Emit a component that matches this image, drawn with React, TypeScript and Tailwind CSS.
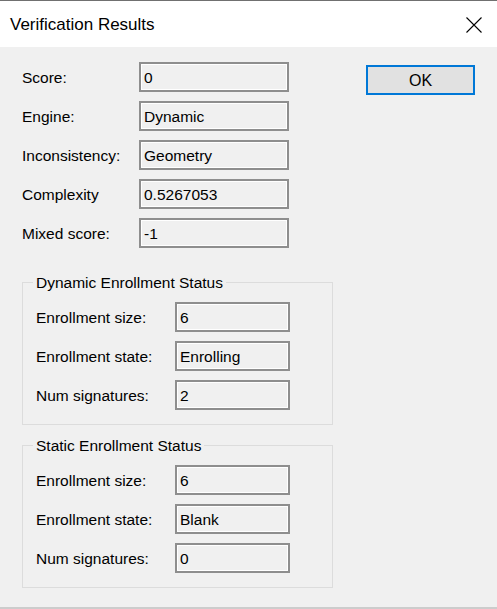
import React from 'react';

const font = { fontFamily: '"Liberation Sans", Arial, sans-serif' };

const ValueBox: React.FC<{ value: string; wide?: boolean }> = ({ value, wide }) => (
  <div
    className={`${wide ? 'w-[150px]' : 'w-[115px]'} h-[30px] flex items-center pl-[3px] pt-[1px] border-2 border-[#8e8e8e] bg-[#f0f0f0] shadow-[inset_0_0_0_1px_#ffffff] text-black`}
  >
    {value}
  </div>
);

const Field: React.FC<{ label: string; value: string }> = ({ label, value }) => (
  <div className="flex items-center h-[30px]">
    <span className="w-[117px] pt-[2px]">{label}</span>
    <ValueBox value={value} wide />
  </div>
);

const GroupField: React.FC<{ label: string; value: string }> = ({ label, value }) => (
  <div className="flex items-center h-[30px]">
    <span className="w-[139px] pt-[2px]">{label}</span>
    <ValueBox value={value} />
  </div>
);

const GroupBox: React.FC<{ title: string; rows: [string, string][] }> = ({ title, rows }) => (
  <div className="relative w-[311px] border border-[#dcdcdc] pt-[19px] pl-[13px] pb-[14px]">
    <span className="absolute left-[10px] top-0 -translate-y-1/2 px-[3px] bg-[#f0f0f0] leading-none">
      {title}
    </span>
    <div className="flex flex-col gap-[9px]">
      {rows.map(([label, value]) => (
        <GroupField key={label} label={label} value={value} />
      ))}
    </div>
  </div>
);

export default function App() {
  return (
    <div
      className="w-[497px] h-[609px] flex flex-col bg-[#f0f0f0] border-t border-[#707070] border-b-2 border-b-[#cccccc] text-[15.5px] text-black overflow-hidden"
      style={font}
    >
      {/* Title bar */}
      <div className="h-[46px] bg-white flex items-center justify-between pl-[10px] pr-[15px] shrink-0">
        <span className="text-[17px] pt-[2px]">Verification Results</span>
        <svg width="16" height="16" viewBox="0 0 16 16" className="mt-[2px]">
          <path d="M0.5 0.5 L15.5 15.5 M15.5 0.5 L0.5 15.5" stroke="#000" strokeWidth="1.1" />
        </svg>
      </div>

      {/* Body */}
      <div className="flex flex-1">
        <div className="w-[333px] pl-[22px] pt-[15px]">
          <div className="flex flex-col gap-[9px]">
            <Field label="Score:" value="0" />
            <Field label="Engine:" value="Dynamic" />
            <Field label="Inconsistency:" value="Geometry" />
            <Field label="Complexity" value="0.5267053" />
            <Field label="Mixed score:" value="-1" />
          </div>

          <div className="mt-[34px] flex flex-col gap-[20px]">
            <GroupBox
              title="Dynamic Enrollment Status"
              rows={[
                ['Enrollment size:', '6'],
                ['Enrollment state:', 'Enrolling'],
                ['Num signatures:', '2'],
              ]}
            />
            <GroupBox
              title="Static Enrollment Status"
              rows={[
                ['Enrollment size:', '6'],
                ['Enrollment state:', 'Blank'],
                ['Num signatures:', '0'],
              ]}
            />
          </div>
        </div>

        <div className="pl-[33px] pt-[18px]">
          <button className="w-[109px] h-[30px] border-2 border-[#0078d7] bg-[#e1e1e1] flex items-center justify-center pt-[1px] text-[16px]">
            OK
          </button>
        </div>
      </div>
    </div>
  );
}
